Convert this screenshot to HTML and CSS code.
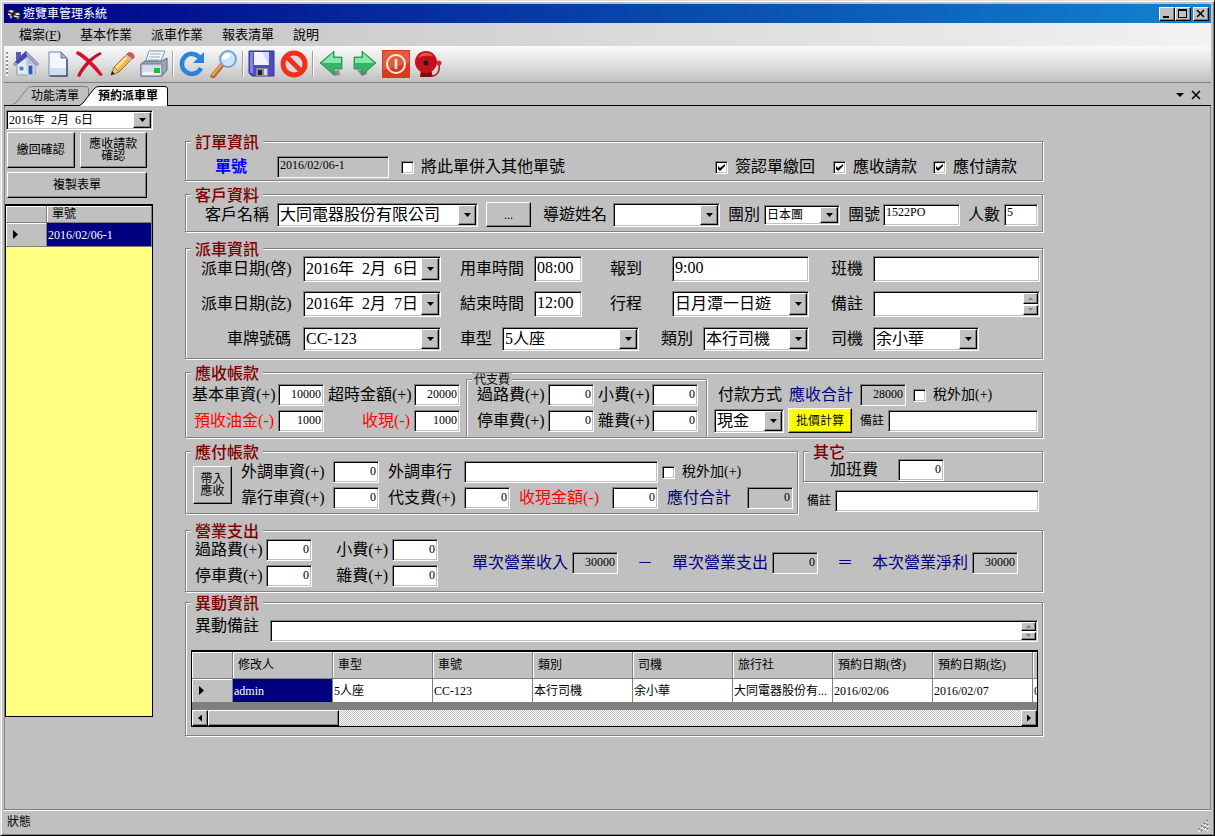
FILE: index.html
```html
<!DOCTYPE html>
<html lang="zh-Hant">
<head>
  <meta charset="UTF-8">
  <meta name="viewport" content="width=device-width, initial-scale=1.0">
  <title>遊覽車管理系統</title>
  <link rel="stylesheet" href="styles.css">
</head>
<body>
<div class="window">
  <header class="titlebar">
    <svg class="app-icon" viewBox="0 0 16 16"><path d="M1 5l4-2 9 3 1 4-3 3-10-4z" fill="#222"/><path d="M2 5l3-1 3 1-2 2zM9 7l4 0 1 2-4 0z" fill="#ddd"/><path d="M2 8l3 1M8 10l5 1" stroke="#eed" stroke-width="1.5"/><circle cx="5" cy="11" r="1.5" fill="#999"/><circle cx="12" cy="12" r="1.5" fill="#777"/></svg>
    <span class="title">遊覽車管理系統</span>
    <button class="win-btn" aria-label="最小化"><svg viewBox="0 0 12 10"><path d="M2 7h6v2H2z"/></svg></button>
    <button class="win-btn" aria-label="最大化"><svg viewBox="0 0 12 10"><path d="M1 0h9v9H1zM2 2v6h7V2z" fill-rule="evenodd"/></svg></button>
    <button class="win-btn close" aria-label="關閉"><svg viewBox="0 0 12 10"><path d="M2 1l7 7M9 1L2 8" stroke="#000" stroke-width="1.5"/></svg></button>
  </header>

  <nav class="menubar">
    <a href="#">檔案(<u>F</u>)</a>
    <a href="#">基本作業</a>
    <a href="#">派車作業</a>
    <a href="#">報表清單</a>
    <a href="#">說明</a>
  </nav>

  <div class="toolbar">
    <span class="grip"></span>
    <button aria-label="首頁"><svg viewBox="0 0 28 28"><path d="M4 2h5v8H4z" fill="#5a5ac0"/><path d="M5 13l9-9 9 9v12H5z" fill="#dfe6f2" stroke="#8d9bb5"/><path d="M14 4l9 9v12h-8z" fill="#b9c4da"/><path d="M14 1L1 14l2 2L14 5l11 11 2-2z" fill="#9aa8c8" stroke="#6b7898" stroke-width=".6"/><path d="M14 1L3 12l3 2 9-7z" fill="#4346b4"/><path d="M7 16h5v5H7z" fill="#4f7fc4" stroke="#fff"/><path d="M16 15h5v10h-5z" fill="#2360ad" stroke="#eef"/></svg></button>
    <button aria-label="新增"><svg viewBox="0 0 28 28"><path d="M5 2h12l6 6v18H5z" fill="#f3f6fc" stroke="#7788a8"/><path d="M6 18h16v7H6z" fill="#d3deef"/><path d="M17 2v6h6z" fill="#9fb3d6" stroke="#64789f"/><path d="M23 9v17H6" fill="none" stroke="#3f5478" stroke-width="1.5"/></svg></button>
    <button aria-label="刪除"><svg viewBox="0 0 28 28"><path d="M1 1L4 2C13 8 21 16 27 25l-3 1C17 18 9 9 0 4z" fill="#d8102e"/><path d="M26 4C17 9 9 17 4 27l-3-1C6 15 14 7 24 2z" fill="#c8102e"/></svg></button>
    <button aria-label="編輯"><svg viewBox="0 0 28 28"><path d="M3 25l3-8L19 4l5 5L11 22z" fill="#f1b54a" stroke="#a87424"/><path d="M7 17L19 5l2 2L9 19z" fill="#ffe09a"/><path d="M3 25l3-8 5 5z" fill="#e9c58d" stroke="#86643a" stroke-width=".6"/><path d="M3 25l1-4 3 3z" fill="#222"/><path d="M17 6l5 5 2-2-5-5z" fill="#bcc3cc"/><path d="M19 4c3-4 10 1 6 5z" fill="#e0564e" stroke="#b23a38" stroke-width=".6"/></svg></button>
    <button aria-label="列印"><svg viewBox="0 0 28 28"><path d="M9 1h16l-5 12H5z" fill="#f4f8ff" stroke="#7f90ad"/><path d="M10 4h11M9 7h11M8 10h11" stroke="#95a6c4"/><path d="M1 14l4-3h17l5-3v12l-5 6H1z" fill="#98a6bc" stroke="#5a6780"/><path d="M1 14h21v12H1z" fill="#d5dce8" stroke="#6d7b94"/><path d="M3 22h17v3H3z" fill="#f2f5fa"/><path d="M14 18h6v5h-6z" fill="#19c22b"/></svg></button>
    <span class="sep"></span>
    <button aria-label="重新整理"><svg viewBox="0 0 28 28"><path d="M22 8A10 10 0 1 0 23 18" fill="none" stroke="#2a84dc" stroke-width="4.5"/><path d="M26 2v11H15z" fill="#2a84dc"/></svg></button>
    <button aria-label="搜尋"><svg viewBox="0 0 28 28"><path d="M3 26l9-11" stroke="#b8692a" stroke-width="5" stroke-linecap="round"/><path d="M3 25l9-11" stroke="#eda75c" stroke-width="2" stroke-linecap="round"/><circle cx="18" cy="9" r="8" fill="#c8e8fa" stroke="#7aa0cc" stroke-width="2"/><path d="M12 9a6 6 0 0 1 9-5c-1 4-5 6-9 5z" fill="#fff"/></svg></button>
    <span class="sep"></span>
    <button aria-label="儲存"><svg viewBox="0 0 28 28"><path d="M1 1h25v25H4l-3-3z" fill="#4a4cc0" stroke="#30308a"/><path d="M2 2h3v21H2z" fill="#8384e0"/><path d="M6 2h15v13H6z" fill="#f2f5ff"/><path d="M14 2h7v13z" fill="#d0d8f2"/><path d="M8 18h12v8H8z" fill="#8a8a98"/><path d="M10 20h4v5h-4z" fill="#222"/><path d="M16 19h3v6h-3z" fill="#d8d8e4"/></svg></button>
    <button aria-label="取消"><svg viewBox="0 0 28 28"><circle cx="14" cy="14" r="11" fill="#d9d9d9" stroke="#f03018" stroke-width="5"/><path d="M6 6l16 16" stroke="#f03018" stroke-width="5"/></svg></button>
    <span class="sep"></span>
    <button aria-label="上一筆"><svg viewBox="0 0 28 28"><path d="M13 22l3 4 6-1-1-5z" fill="#888"/><path d="M2 13L16 1v6h8v12h-8v6z" fill="#34b568" stroke="#208a48" stroke-width=".8"/><path d="M4 13L15 3v5h8v5z" fill="#86e8a8"/></svg></button>
    <button aria-label="下一筆"><svg viewBox="0 0 28 28"><path d="M7 20l5 6 5-2v-4z" fill="#888"/><path d="M26 13L12 1v6H4v12h8v6z" fill="#34b568" stroke="#208a48" stroke-width=".8"/><path d="M24 13L13 3v5H5v5z" fill="#86e8a8"/></svg></button>
    <button aria-label="離開"><svg viewBox="0 0 28 28"><path d="M0 0h28v28H0z" fill="#d83a20"/><path d="M1 1h26v12L1 20z" fill="#e25a40"/><circle cx="14" cy="14" r="9" fill="none" stroke="#fff0dc" stroke-width="2"/><path d="M14 9v10" stroke="#fff0dc" stroke-width="2.5"/></svg></button>
    <button aria-label="提醒"><svg viewBox="0 0 28 28"><path d="M7 20h10l2 7H6z" fill="#7e0a10"/><path d="M17 26c7 0 9-5 8-13" fill="none" stroke="#b81218" stroke-width="1.5"/><circle cx="25" cy="13" r="2.5" fill="#d8262c"/><circle cx="12" cy="12" r="11" fill="#c4121a"/><path d="M4 8c3-6 10-7 15-2-5-1-10-1-15 2z" fill="#e8565a"/><circle cx="12" cy="13" r="2.5" fill="#122"/></svg></button>
  </div>

  <div class="tabs">
    <button class="tab"><svg viewBox="0 0 80 19"><path d="M.5 18.5Q4 18 7 13L15 3Q17 .5 20 .5H74Q76.5 .5 76.5 3V18.5" fill="#c0c0c0" stroke="#808080"/></svg><span>功能清單</span></button>
    <button class="tab active"><svg viewBox="0 0 90 20"><path d="M0 20Q4 18 7 13L15 3Q17 .5 20 .5H86Q88.5 .5 88.5 3V20" fill="#fff" stroke="#000"/></svg><span>預約派車單</span></button>
    <span class="tab-tools">
      <button aria-label="分頁清單"><svg viewBox="0 0 10 10"><path d="M1 3h8L5 7z"/></svg></button>
      <button aria-label="關閉分頁"><svg viewBox="0 0 10 10"><path d="M1 1l8 8M9 1L1 9" stroke="#000" stroke-width="1.5"/></svg></button>
    </span>
  </div>

  <main class="workspace">
    <aside class="sidebar">
      <span class="combo small"><select aria-label="日期"><option>2016年&ensp;2月&ensp;6日</option></select></span>
      <div class="side-buttons">
        <button class="btn">繳回確認</button>
        <button class="btn">應收請款<br>確認</button>
        <button class="btn wide">複製表單</button>
      </div>
      <div class="side-grid">
        <table>
          <thead><tr><th class="rowhead"></th><th>單號</th></tr></thead>
          <tbody><tr><th class="rowhead"><i class="arrow"></i></th><td class="selected">2016/02/06-1</td></tr></tbody>
        </table>
      </div>
    </aside>

    <form class="order">
      <fieldset>
        <legend>訂單資訊</legend>
        <div class="order-row">
          <label class="order-no" for="orderNo">單號</label>
          <input class="small" id="orderNo" value="2016/02/06-1" readonly>
          <label class="check"><input type="checkbox">將此單併入其他單號</label>
          <label class="check"><input type="checkbox" checked>簽認單繳回</label>
          <label class="check"><input type="checkbox" checked>應收請款</label>
          <label class="check"><input type="checkbox" checked>應付請款</label>
        </div>
      </fieldset>

      <fieldset>
        <legend>客戶資料</legend>
        <div class="customer-row">
          <label for="customer">客戶名稱</label>
          <span class="combo"><select id="customer"><option>大同電器股份有限公司</option></select></span>
          <button class="btn more" type="button">...</button>
          <label for="guide">導遊姓名</label>
          <span class="combo"><select id="guide"><option></option></select></span>
          <label for="groupType">團別</label>
          <span class="combo small"><select id="groupType"><option>日本團</option></select></span>
          <label for="groupNo">團號</label>
          <input class="small" id="groupNo" value="1522PO">
          <label for="people">人數</label>
          <input class="small" id="people" value="5">
        </div>
      </fieldset>

      <fieldset>
        <legend>派車資訊</legend>
        <div class="dispatch">
          <div class="dispatch-row">
            <label for="dateFrom">派車日期(啓)</label>
            <span class="combo"><select id="dateFrom"><option>2016年&ensp;2月&ensp;6日</option></select></span>
            <label for="timeFrom">用車時間</label>
            <input id="timeFrom" value="08:00">
            <label class="far" for="report">報到</label>
            <input id="report" value="9:00">
            <label for="flight">班機</label>
            <input id="flight">
          </div>
          <div class="dispatch-row">
            <label for="dateTo">派車日期(訖)</label>
            <span class="combo"><select id="dateTo"><option>2016年&ensp;2月&ensp;7日</option></select></span>
            <label for="timeTo">結束時間</label>
            <input id="timeTo" value="12:00">
            <label class="far" for="trip">行程</label>
            <span class="combo"><select id="trip"><option>日月潭一日遊</option></select></span>
            <label for="memo">備註</label>
            <span class="memo"><textarea id="memo" rows="1"></textarea><span class="spin"><button type="button" aria-label="上捲" disabled></button><button type="button" aria-label="下捲" disabled></button></span></span>
          </div>
          <div class="dispatch-row car">
            <label for="plate">車牌號碼</label>
            <span class="combo"><select id="plate"><option>CC-123</option></select></span>
            <label for="carType">車型</label>
            <span class="combo"><select id="carType"><option>5人座</option></select></span>
            <label for="kind">類別</label>
            <span class="combo"><select id="kind"><option>本行司機</option></select></span>
            <label for="driver">司機</label>
            <span class="combo"><select id="driver"><option>余小華</option></select></span>
          </div>
        </div>
      </fieldset>

      <fieldset>
        <legend>應收帳款</legend>
        <div class="receivable">
          <div class="money">
            <label for="baseFee">基本車資(+)</label><input class="num" id="baseFee" value="10000">
            <label for="overtime">超時金額(+)</label><input class="num" id="overtime" value="20000">
            <label class="minus" for="oil">預收油金(-)</label><input class="num" id="oil" value="1000">
            <label class="minus" for="cash">收現(-)</label><input class="num" id="cash" value="1000">
          </div>
          <fieldset class="inner">
            <legend>代支費</legend>
            <div class="money narrow">
              <label for="toll">過路費(+)</label><input class="num" id="toll" value="0">
              <label for="tip">小費(+)</label><input class="num" id="tip" value="0">
              <label for="parking">停車費(+)</label><input class="num" id="parking" value="0">
              <label for="misc">雜費(+)</label><input class="num" id="misc" value="0">
            </div>
          </fieldset>
          <div class="payment">
            <div class="line">
              <label for="payWay">付款方式</label>
              <label class="total" for="recvTotal">應收合計</label>
              <input class="num" id="recvTotal" value="28000" readonly>
              <label class="check tax"><input type="checkbox">稅外加(+)</label>
            </div>
            <div class="line pay">
              <span class="combo"><select id="payWay"><option>現金</option></select></span>
              <button class="btn calc" type="button">批價計算</button>
              <label class="note" for="recvNote">備註</label>
              <input id="recvNote">
            </div>
          </div>
        </div>
      </fieldset>

      <div class="payable-area">
        <fieldset>
          <legend>應付帳款</legend>
          <div class="payable">
            <button class="btn" type="button">帶入<br>應收</button>
            <div class="payable-rows">
              <label for="outFee">外調車資(+)</label><input class="num" id="outFee" value="0">
              <label for="outFirm">外調車行</label>
              <div class="firm">
                <input id="outFirm">
                <label class="check tax"><input type="checkbox">稅外加(+)</label>
              </div>
              <label for="ownFee">靠行車資(+)</label><input class="num" id="ownFee" value="0">
              <label for="advance">代支費(+)</label><input class="num" id="advance" value="0">
              <label class="minus" for="cashAmt">收現金額(-)</label><input class="num" id="cashAmt" value="0">
              <label class="total" for="payTotal">應付合計</label><input class="num" id="payTotal" value="0" readonly>
            </div>
          </div>
        </fieldset>
        <div class="other">
          <fieldset>
            <legend>其它</legend>
            <div class="shift"><label for="shiftFee">加班費</label><input class="num" id="shiftFee" value="0"></div>
          </fieldset>
          <div class="line other-note">
            <label class="note" for="payNote">備註</label>
            <input id="payNote">
          </div>
        </div>
      </div>

      <fieldset>
        <legend>營業支出</legend>
        <div class="expense">
          <div class="money expense-in">
            <label for="toll2">過路費(+)</label><input class="num" id="toll2" value="0">
            <label for="tip2">小費(+)</label><input class="num" id="tip2" value="0">
            <label for="parking2">停車費(+)</label><input class="num" id="parking2" value="0">
            <label for="misc2">雜費(+)</label><input class="num" id="misc2" value="0">
          </div>
          <div class="result">
            <label for="income">單次營業收入</label><input class="num" id="income" value="30000" readonly>
            <span class="op">－</span>
            <label for="outgo">單次營業支出</label><input class="num" id="outgo" value="0" readonly>
            <span class="op">＝</span>
            <label for="profit">本次營業淨利</label><input class="num" id="profit" value="30000" readonly>
          </div>
        </div>
      </fieldset>

      <fieldset>
        <legend>異動資訊</legend>
        <div class="history">
          <div class="history-note">
            <label for="changeNote">異動備註</label>
            <span class="memo"><textarea id="changeNote" rows="1"></textarea><span class="spin"><button type="button" aria-label="上捲" disabled></button><button type="button" aria-label="下捲" disabled></button></span></span>
          </div>
          <div class="grid">
            <div class="grid-view">
              <table>
                <thead>
                  <tr><th class="rowhead"></th><th>修改人</th><th>車型</th><th>車號</th><th>類別</th><th>司機</th><th>旅行社</th><th>預約日期(啓)</th><th>預約日期(迄)</th><th></th></tr>
                </thead>
                <tbody>
                  <tr><th class="rowhead"><i class="arrow"></i></th><td class="selected">admin</td><td>5人座</td><td>CC-123</td><td>本行司機</td><td>余小華</td><td>大同電器股份有...</td><td>2016/02/06</td><td>2016/02/07</td><td>0</td></tr>
                </tbody>
              </table>
            </div>
            <div class="hscroll">
              <button type="button" aria-label="左捲"><i class="arrow left"></i></button>
              <span class="thumb"></span>
              <button type="button" aria-label="右捲"><i class="arrow"></i></button>
            </div>
          </div>
        </div>
      </fieldset>
    </form>
  </main>

  <footer class="statusbar">
    <span>狀態</span>
    <svg viewBox="0 0 13 13"><path d="M12 2L2 12M12 6l-6 6M12 10l-2 2" stroke="#fff" stroke-width="3" stroke-dasharray="2 2"/><path d="M12 1L1 12M12 5l-7 7M12 9l-3 3" stroke="#808080" stroke-width="2" stroke-dasharray="2 2"/></svg>
  </footer>
</div>
</body>
</html>
```

FILE: styles.css
```css
:root { --face:#c0c0c0; --dark:#808080; --navy:#000080; }
*{box-sizing:border-box;}
body{margin:0;background:var(--face);color:#000;font:16px/16px "Liberation Serif","Noto Sans CJK TC",serif;}
button,input,select,textarea{font:inherit;color:inherit;margin:0;border-radius:0;}
button{padding:0;border:0;background:none;}
svg{display:block;}
label{white-space:nowrap;}

/* window frame */
.window{display:flex;flex-direction:column;min-height:100vh;padding:3px;border:1px solid;border-color:#dfdfdf #000 #000 #dfdfdf;box-shadow:inset 1px 1px #fff,inset -1px -1px var(--dark);}
.titlebar{display:flex;align-items:center;height:19px;padding:0 2px;background:linear-gradient(90deg,#000088,#1084d0);color:#fff;font-size:12px;}
.app-icon{width:16px;height:16px;margin-right:1px;}
.title{flex:1;}
.win-btn,.btn,.hscroll button,.thumb,.spin button,.combo::after{background:var(--face);border:1px solid;border-color:#fff #000 #000 #fff;box-shadow:inset -1px -1px var(--dark);}
.win-btn{width:16px;height:14px;}
.win-btn svg{width:12px;height:10px;margin:auto;}
.win-btn.close{margin-left:2px;}
.menubar{display:flex;align-items:center;gap:19px;height:23px;padding-left:15px;background:linear-gradient(90deg,#c0c0c0,#f2f2f2);font-size:13px;}
.menubar a{color:#000;text-decoration:none;}
.toolbar{display:flex;align-items:center;height:37px;border-bottom:1px solid var(--dark);background:linear-gradient(#fafafa,#e0e0e0 50%,#c0c0c0);}
.toolbar button{display:flex;justify-content:center;width:32px;}
.toolbar svg{width:28px;height:28px;}
.grip{width:2px;height:24px;margin:0 2px;background:repeating-linear-gradient(#909090 0 2px,#fff 2px 4px);}
.sep{width:2px;height:26px;margin:0 2px;border-left:1px solid #a0a0a0;border-right:1px solid #fff;}

.tabs{display:flex;align-items:flex-end;height:23px;padding-left:8px;border-bottom:1px solid #000;font-size:12px;}
.tab{display:grid;width:67px;height:19px;}
.tab svg,.tab span{grid-area:1/1;}
.tab svg{width:80px;height:19px;}
.tab span{align-self:center;text-align:left;padding-left:19px;}
.tab.active{width:90px;height:20px;margin-bottom:-1px;font-weight:bold;}
.tab.active svg{width:90px;height:20px;}
.tab-tools{display:flex;gap:6px;margin:0 10px 5px auto;}
.tab-tools svg{width:10px;height:10px;}

.workspace{flex:1;display:flex;gap:32px;border:1px solid var(--dark);border-width:0 1px 1px;}
.sidebar{display:flex;flex-direction:column;width:148px;padding:4px 0 92px;font-size:12px;line-height:12px;}
.sidebar .combo{height:22px;flex:none;padding-left:1px;}
.side-buttons{display:grid;grid-template-columns:1fr 1fr;gap:4px 5px;padding:2px 6px 6px 2px;}
.btn{font-size:12px;line-height:12px;min-height:25px;}
.side-buttons .btn{min-height:36px;}
.side-buttons .wide{grid-column:1/3;min-height:26px;}

/* grids */
.side-grid,.grid{border:1px solid #000;border-top-width:2px;}
.side-grid{flex:1;background:#ffff80;}
table{border-collapse:separate;border-spacing:0;table-layout:fixed;width:100%;font-size:12px;line-height:12px;}
th,td{padding:0 2px;border:1px solid var(--dark);border-width:0 1px 1px 0;text-align:left;font-weight:normal;white-space:nowrap;overflow:hidden;}
th{background:var(--face);padding-left:5px;box-shadow:inset 1px 1px #fff;}
td{background:#fff;height:24px;padding-left:1px;}
td.selected{background:var(--navy);color:#fff;}
.rowhead{width:41px;}
.side-grid thead th{height:17px;}
.arrow{display:block;width:5px;height:9px;margin-left:2px;background:#000;clip-path:polygon(0 0,100% 50%,0 100%);}
.arrow.left{clip-path:polygon(100% 0,0 50%,100% 100%);}

/* order form */
.order{flex:1;max-width:858px;min-width:0;padding-top:28px;display:grid;grid-template-columns:minmax(0,1fr);grid-template-rows:53px 54px 124px 79px 79px 72px auto;align-items:start;align-content:start;}
fieldset{min-width:0;margin:0;padding:0;border:1px solid var(--dark);box-shadow:1px 1px #fff,inset 1px 1px #fff;}
legend{height:15px;line-height:17px;margin-left:5px;padding:0 4px;background:var(--face);color:#800000;font-weight:500;}
input,textarea,select{width:100%;min-width:0;height:22px;padding:0 2px;background:#fff;border:1px solid;border-color:var(--dark) #fff #fff var(--dark);box-shadow:inset 1px 1px #000,inset -1px -1px var(--face);outline:none;}
input[readonly]{background:var(--face);}
select{appearance:none;height:100%;}
textarea{resize:none;overflow:hidden;height:100%;display:block;}
.small,.num{font-size:12px;}
.num{text-align:right;padding:0 2px 2px;}
input.small{padding-bottom:4px;}
.minus{color:#f00;}
.total,.result{color:var(--navy);}
.note{font-size:12px;}

.combo{display:grid;height:24px;min-width:0;}
.combo select{grid-area:1/1;}
.combo::after{content:"";grid-area:1/1;justify-self:end;width:16px;margin:2px;pointer-events:none;background:url("data:image/svg+xml,%3Csvg xmlns='http://www.w3.org/2000/svg' width='7' height='4'%3E%3Cpath d='M0 0h7L3.5 4z'/%3E%3C/svg%3E") center no-repeat var(--face);}
.combo.small{height:20px;}
.memo{display:grid;height:26px;min-width:0;}
.memo textarea,.spin{grid-area:1/1;}
.spin{justify-self:end;display:grid;gap:1px;width:15px;margin:2px;}
.spin button{background:url("data:image/svg+xml,%3Csvg xmlns='http://www.w3.org/2000/svg' width='5' height='3'%3E%3Cpath d='M0 3h5L2.5 0z' fill='gray'/%3E%3C/svg%3E") center no-repeat var(--face);}
.spin button+button{background-image:url("data:image/svg+xml,%3Csvg xmlns='http://www.w3.org/2000/svg' width='5' height='3'%3E%3Cpath d='M0 0h5L2.5 3z' fill='gray'/%3E%3C/svg%3E");}
.check{display:flex;align-items:center;gap:7px;}
.check input{appearance:none;flex:none;width:13px;height:13px;}
.check input:checked{background:url("data:image/svg+xml,%3Csvg xmlns='http://www.w3.org/2000/svg' width='7' height='7'%3E%3Cpath d='M0 2v3l2 2 5-5V0L2 4z'/%3E%3C/svg%3E") center no-repeat #fff;}
.tax{font-size:14px;}

.order-row{display:grid;grid-template-columns:50px 112px 302px 106px 88px 1fr;column-gap:12px;align-items:center;padding:7px 0 2px 29px;}
.order-no{color:#00f;font-weight:bold;}
.customer-row{display:grid;grid-template-columns:64px 201px 49px 62px 107px 28px 76px 27px 77px 28px 1fr;column-gap:8px;align-items:center;padding:0 4px 4px 19px;}
.customer-row .more{width:45px;}
.dispatch{display:grid;gap:9px;padding:0 2px 6px 15px;}
.dispatch-row{display:grid;grid-template-columns:92px 138px 73px 48px 70px 137px 44px 1fr;column-gap:10px;align-items:center;}
.dispatch-row.car{grid-template-columns:92px 138px 41px 137px 44px 106px 44px 106px;}
.dispatch-row label{text-align:right;}
.dispatch-row label:first-child{padding-right:2px;}
.dispatch-row .far{padding-right:20px;}
.dispatch-row input,.dispatch-row .combo{height:26px;}
.dispatch-row.car .combo{height:24px;margin:1px 0;}
.dispatch-row input{padding-bottom:3px;}

.receivable{display:flex;align-items:stretch;margin-top:-7px;}
.money{display:grid;grid-template-columns:82px 46px 82px 46px;gap:4px;align-items:center;align-content:start;text-align:right;}
.receivable>.money{padding:11px 6px 5px;}
.inner{border-bottom:0;box-shadow:1px 0 #fff,inset 1px 1px #fff;}
.inner legend{height:13px;line-height:15px;padding:0 2px;font-size:12px;color:#000;font-weight:normal;}
.narrow{grid-template-columns:67px 46px 50px 46px;padding:0 8px 0 10px;margin-top:-2px;}
.payment{flex:1;display:grid;gap:2px;align-content:start;padding:11px 4px 0 7px;}
.line{display:flex;align-items:center;gap:4px;}
.line .num{width:46px;}
.payment .line:first-child{gap:7px;padding-left:4px;}
.pay .combo{width:70px;flex:none;}
.calc{flex:none;width:64px;background:#ff0;}
.pay .note{padding-left:4px;}

.payable-area{display:grid;grid-template-columns:613px 1fr;gap:5px;align-items:start;}
.payable{display:flex;align-items:center;gap:9px;padding:2px 4px 4px 7px;}
.payable .btn{width:39px;height:38px;}
.payable-rows{flex:1;display:grid;grid-template-columns:83px 46px 67px 46px 84px 46px 71px 46px;gap:4px 9px;align-items:center;}
.firm{grid-column:4/9;display:flex;align-items:center;gap:4px;}
.firm>input{width:194px;}
.shift{display:grid;grid-template-columns:64px 46px;gap:4px;align-items:center;padding-left:26px;}
.other-note{padding:8px 4px 0;}
.expense{display:flex;align-items:center;gap:34px;padding:1px 0 4px 9px;}
.expense-in{grid-template-columns:67px 46px 72px 46px;}
.result{display:flex;align-items:center;gap:4px;}
.result input{width:46px;color:#000;}
.op{width:46px;text-align:center;}

.history{padding:6px 4px 8px 5px;}
.history-note{display:flex;justify-content:space-between;gap:11px;height:26px;line-height:20px;padding-left:4px;margin-bottom:8px;}
.history-note .memo{flex:1;align-self:end;height:22px;}
.grid{background:var(--dark);}
.grid-view{overflow:hidden;padding-bottom:7px;}
.grid table{width:941px;}
.grid thead th{height:27px;}
.hscroll{display:flex;height:16px;background:repeating-conic-gradient(#fff 0 25%,var(--face) 0 50%) 0 0/2px 2px;}
.hscroll button{width:16px;display:grid;place-items:center;}
.hscroll button:last-child{margin-left:auto;}
.hscroll .arrow{margin:0;height:7px;width:4px;}
.thumb{width:131px;}

.statusbar{display:flex;justify-content:space-between;height:22px;padding:0 2px 0 3px;align-items:center;border-top:1px solid #fff;font-size:12px;}
.statusbar svg{width:13px;height:13px;align-self:end;}
```
